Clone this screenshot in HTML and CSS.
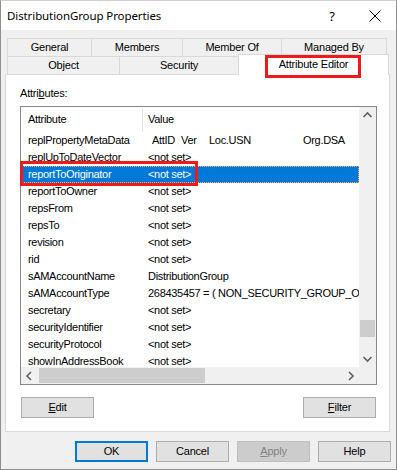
FILE: index.html
```html
<!DOCTYPE html>
<html>
<head>
<meta charset="utf-8">
<link rel="stylesheet" href="styles.css">
</head>
<body>
<div class="window">
  <div class="titlebar">
    <span class="title">DistributionGroup Properties</span>
    <span class="help-q">?</span>
    <svg class="close-x" width="12" height="12" viewBox="0 0 12 12"><path d="M0.5 0.5 L11.5 11.5 M11.5 0.5 L0.5 11.5" stroke="#000" stroke-width="1" fill="none"/></svg>
  </div>
  <div class="content">
    <div class="tabrow row1">
      <div class="tab t-general">General</div>
      <div class="tab t-members">Members</div>
      <div class="tab t-memberof">Member Of</div>
      <div class="tab t-managed last">Managed By</div>
    </div>
    <div class="tabrow row2">
      <div class="tab t-object">Object</div>
      <div class="tab t-security">Security</div>
      <div class="tab t-attr selected last">Attribute Editor</div>
    </div>
    <div class="panel">
      <div class="label">Attri<u>b</u>utes:</div>
      <div class="listbox">
        <div class="listarea">
          <div class="lrow header"><div class="c1">Attribute</div><div class="c2 hdr2">Value</div></div>
          <div class="lrow"><div class="c1">replPropertyMetaData</div><div class="c2"><span class="m1">AttID</span><span class="m2">Ver</span><span class="m3">Loc.USN</span><span>Org.DSA</span></div></div>
          <div class="lrow"><div class="c1">replUpToDateVector</div><div class="c2">&lt;not set&gt;</div></div>
          <div class="lrow sel"><div class="c1">reportToOriginator</div><div class="c2">&lt;not set&gt;</div></div>
          <div class="lrow"><div class="c1">reportToOwner</div><div class="c2">&lt;not set&gt;</div></div>
          <div class="lrow"><div class="c1">repsFrom</div><div class="c2">&lt;not set&gt;</div></div>
          <div class="lrow"><div class="c1">repsTo</div><div class="c2">&lt;not set&gt;</div></div>
          <div class="lrow"><div class="c1">revision</div><div class="c2">&lt;not set&gt;</div></div>
          <div class="lrow"><div class="c1">rid</div><div class="c2">&lt;not set&gt;</div></div>
          <div class="lrow"><div class="c1">sAMAccountName</div><div class="c2">DistributionGroup</div></div>
          <div class="lrow"><div class="c1">sAMAccountType</div><div class="c2">268435457 = ( NON_SECURITY_GROUP_OBJECT )</div></div>
          <div class="lrow"><div class="c1">secretary</div><div class="c2">&lt;not set&gt;</div></div>
          <div class="lrow"><div class="c1">securityIdentifier</div><div class="c2">&lt;not set&gt;</div></div>
          <div class="lrow"><div class="c1">securityProtocol</div><div class="c2">&lt;not set&gt;</div></div>
          <div class="lrow"><div class="c1">showInAddressBook</div><div class="c2">&lt;not set&gt;</div></div>
        </div>
        <div class="vscroll">
          <svg class="arrow" width="17" height="17" viewBox="0 0 17 17"><path d="M4.5 10 L8.5 6 L12.5 10" stroke="#606060" stroke-width="1.6" fill="none"/></svg>
          <div class="vtrack"><div class="vthumb"></div></div>
          <svg class="arrow" width="17" height="17" viewBox="0 0 17 17"><path d="M4.5 7 L8.5 11 L12.5 7" stroke="#606060" stroke-width="1.6" fill="none"/></svg>
        </div>
        <div class="hscroll">
          <svg class="arrow" width="17" height="16" viewBox="0 0 17 16"><path d="M10 4 L6 8 L10 12" stroke="#606060" stroke-width="1.6" fill="none"/></svg>
          <div class="htrack"><div class="hthumb"></div></div>
          <svg class="arrow" width="17" height="16" viewBox="0 0 17 16"><path d="M7 4 L11 8 L7 12" stroke="#606060" stroke-width="1.6" fill="none"/></svg>
        </div>
        <div class="corner"></div>
      </div>
      <div class="panelbtns">
        <div class="btn"><u>E</u>dit</div>
        <div class="btn"><u>F</u>ilter</div>
      </div>
    </div>
    <div class="dlgbtns">
      <div class="btn default">OK</div>
      <div class="btn">Cancel</div>
      <div class="btn disabled"><u>A</u>pply</div>
      <div class="btn">Help</div>
    </div>
  </div>
  <div class="mark mark-tab"></div>
  <div class="mark mark-row"></div>
</div>
</body>
</html>
```

FILE: styles.css
```css
* { box-sizing: border-box; }
html, body { margin: 0; padding: 0; background: #f0f0f0; }
body { font-family: "Liberation Sans", Arial, sans-serif; font-size: 11px; color: #000; }

.window {
  position: relative;
  width: 397px;
  height: 470px;
  background: #f0f0f0;
  border: 1px solid #8f8f8f;
  border-top-color: #d0d0d0;
  overflow: hidden;
}

.titlebar {
  height: 29px;
  background: #fff;
  display: flex;
  align-items: center;
  padding-left: 6px;
}
.title {
  font-family: "Noto Sans", "Open Sans", sans-serif;
  font-size: 11.5px;
  letter-spacing: -0.1px;
  flex: 1;
  padding-bottom: 1px;
}
.help-q {
  font-family: "Noto Sans", sans-serif;
  font-size: 13px;
  margin-right: 34px;
}
.close-x { margin-right: 15px; }

.content {
  padding: 8px 0 0 4px;
}

.tabrow { display: flex; margin-left: 2px; }
.row1 { height: 18px; }
.row2 { height: 18px; }
.tab {
  border-left: 1px solid #d9d9d9;
  border-top: 1px solid #d9d9d9;
  background: #f0f0f0;
  text-align: center;
  line-height: 17px;
  letter-spacing: -0.2px;
}
.tab.last { border-right: 1px solid #d9d9d9; }
.t-general { width: 84px; }
.t-members { width: 91px; }
.t-memberof { width: 99px; }
.t-managed { width: 106px; }
.t-object { width: 112px; }
.t-security { width: 119px; }
.t-attr { width: 151px; }
.tab.selected {
  background: #fff;
  margin-top: -2px;
  height: 21px;
  line-height: 19px;
  position: relative;
  z-index: 1;
}

.panel {
  width: 385px;
  height: 358px;
  background: #fff;
  border: 1px solid #d9d9d9;
  padding: 11px 0 0 14px;
}
.label { height: 20px; line-height: 14px; letter-spacing: -0.2px; }

.listbox {
  width: 357px;
  height: 279px;
  border: 1px solid #828790;
  display: grid;
  grid-template-columns: 338px 17px;
  grid-template-rows: 260px 17px;
}
.listarea { overflow: hidden; background: #fff; }
.lrow {
  display: flex;
  height: 17px;
  line-height: 17px;
  white-space: nowrap;
  letter-spacing: -0.3px;
}
.lrow.header { height: 25px; line-height: 25px; }
.c1 { width: 121px; padding-left: 7px; flex: none; overflow: hidden; }
.c2 { padding-left: 6px; flex: 1; overflow: hidden; }
.hdr2 { border-left: 1px solid #e5e5e5; padding-left: 5px; margin: 1px 0 0; line-height: 23px; }
.lrow.sel { background: #0078d7; color: #fff; outline: 1px dotted #f3b45a; outline-offset: -1px; }
.m1 { display: inline-block; width: 29px; margin-left: 4px; }
.m2 { display: inline-block; width: 28px; }
.m3 { display: inline-block; width: 94px; }

.vscroll {
  grid-row: 1; grid-column: 2;
  background: #f0f0f0;
  display: flex;
  flex-direction: column;
}
.vtrack { flex: 1; position: relative; }
.vthumb { position: absolute; left: 1px; right: 1px; top: 196px; height: 17px; background: #cdcdcd; }
.hscroll {
  grid-row: 2; grid-column: 1;
  background: #f0f0f0;
  display: flex;
  align-items: center;
}
.htrack { flex: 1; height: 100%; position: relative; }
.hthumb { position: absolute; top: 1px; bottom: 1px; left: 1px; width: 166px; background: #cdcdcd; }
.corner { grid-row: 2; grid-column: 2; background: #f0f0f0; }
.arrow { display: block; flex: none; }

.panelbtns {
  display: flex;
  justify-content: space-between;
  width: 356px;
  margin-top: 12px;
  padding-left: 1px;
}
.btn {
  width: 73px;
  height: 21px;
  background: #e1e1e1;
  border: 1px solid #adadad;
  text-align: center;
  line-height: 19px;
  letter-spacing: -0.2px;
}
.btn.default { border: 2px solid #0078d7; line-height: 17px; }
.btn.disabled { background: #cccccc; border-color: #bfbfbf; color: #838383; }

.dlgbtns {
  display: flex;
  gap: 8px;
  justify-content: flex-end;
  padding-right: 5px;
  margin-top: 9px;
}

.mark { position: absolute; border: 3px solid #f01a1a; z-index: 5; }
.mark-tab { left: 264px; top: 54px; width: 96px; height: 23px; }
.mark-row { left: 19px; top: 160px; width: 178px; height: 25px; }
```
